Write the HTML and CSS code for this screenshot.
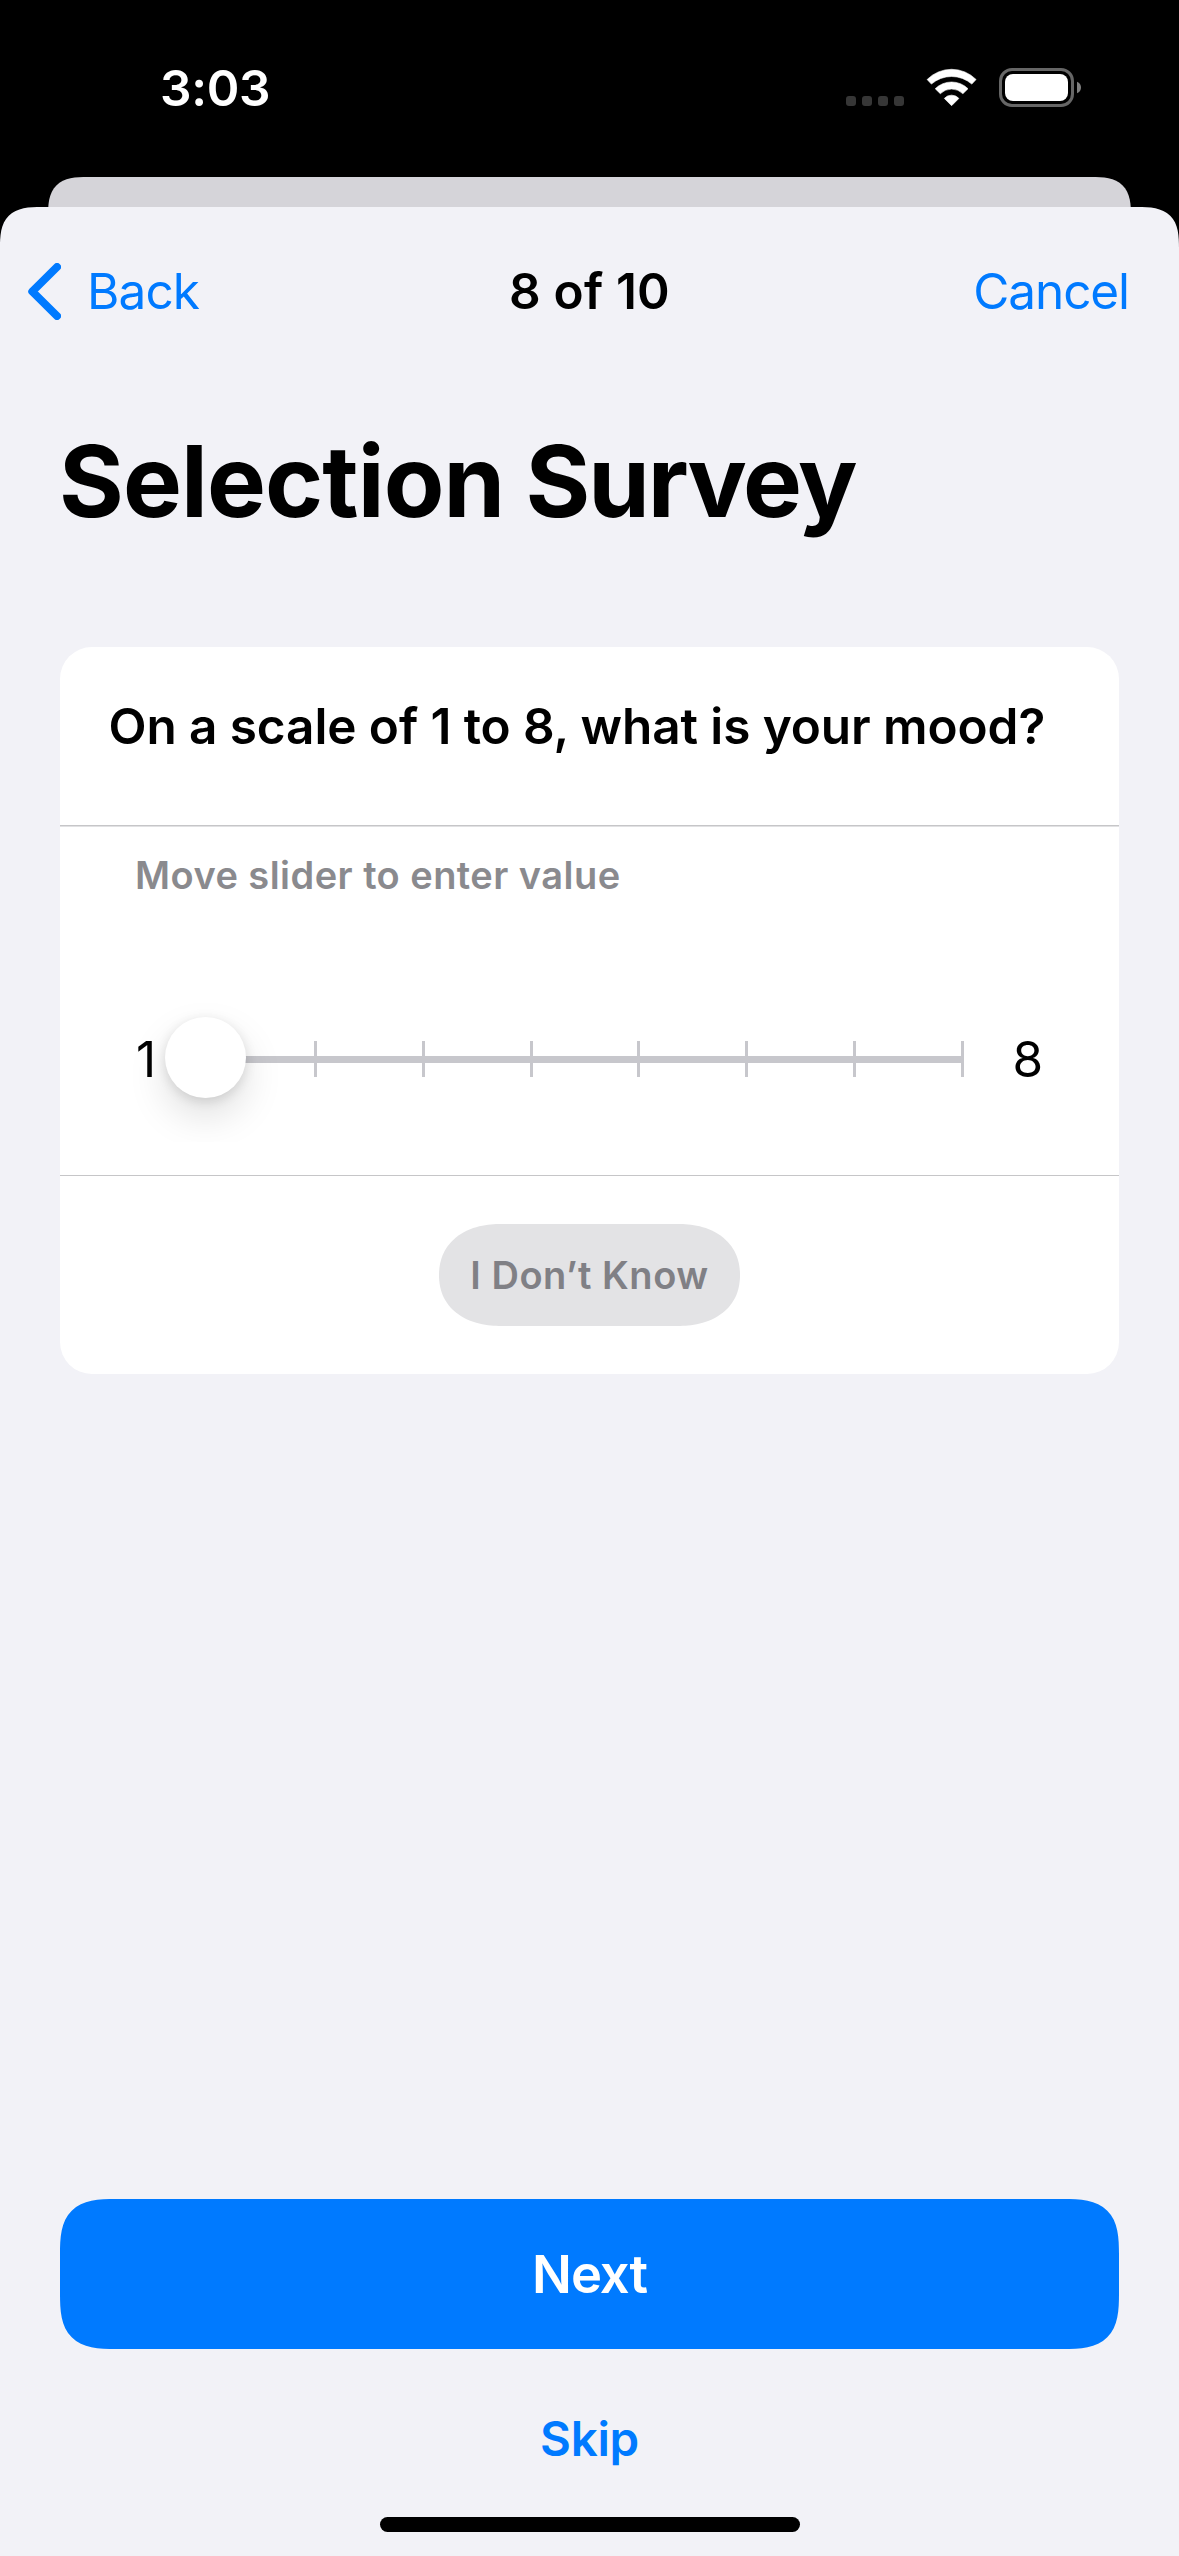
FILE: index.html
```html
<!DOCTYPE html>
<html lang="en">
<head>
<meta charset="utf-8">
<title>Selection Survey</title>
<link rel="stylesheet" href="styles.css">
</head>
<body>
<div class="screen">
  <header class="status-bar">
    <span class="clock">3:03</span>
    <div class="indicators">
      <svg width="58" height="39" viewBox="0 0 58 39" fill="#363636">
        <rect x="0" y="28" width="10" height="10" rx="3"/>
        <rect x="16" y="28" width="10" height="10" rx="3"/>
        <rect x="32" y="28" width="10" height="10" rx="3"/>
        <rect x="48" y="28" width="10" height="10" rx="3"/>
      </svg>
      <svg width="51" height="39" viewBox="0 0 51 39" fill="#fff" stroke="#fff" stroke-width=".6" stroke-linejoin="round">
        <path d="M1.1 11.5A34.5 34.5 0 0 1 50.1 11.5L45.8 16.1A30.6 30.6 0 0 0 5.4 16.1Z"/>
        <path d="M9.2 20.7A23.4 23.4 0 0 1 42 20.7L36.9 25.7A16 16 0 0 0 14.3 25.7Z"/>
        <path d="M18.3 30.4A9.8 9.8 0 0 1 32.9 30.4L25.6 37.7Z"/>
      </svg>
      <svg width="83" height="39" viewBox="0 0 83 39">
        <rect x="1.5" y="1.5" width="72" height="36" rx="11.5" fill="none" stroke="#666" stroke-width="3"/>
        <rect x="6" y="6" width="63" height="27" rx="8" fill="#fff"/>
        <path d="M78 13.7C80.7 14.8 82 17 82 19.5S80.7 24.2 78 25.3Z" fill="#808080"/>
      </svg>
    </div>
  </header>
  <div class="sheet-behind"></div>
  <main class="sheet">
    <nav class="nav">
      <a class="back">
        <svg width="33" height="57" viewBox="0 0 33 57" fill="none" stroke="#007aff" stroke-width="8" stroke-linecap="round" stroke-linejoin="round"><path d="M29 4L4.3 28.5L29 53"/></svg>
        <span class="back-label">Back</span>
      </a>
      <span class="step">8 of 10</span>
      <a class="cancel">Cancel</a>
    </nav>
    <h1 class="title"><span class="title-lead">Selection</span> Survey</h1>
    <section class="card">
      <h2 class="question">On a scale of 1 to 8, what is your mood?</h2>
      <div class="answer">
        <p class="hint">Move slider to enter value</p>
        <div class="scale">
          <span class="min">1</span>
          <div class="track">
            <i class="tick"></i><i class="tick"></i><i class="tick"></i><i class="tick"></i><i class="tick"></i><i class="tick"></i><i class="tick"></i><i class="tick"></i>
            <span class="thumb"></span>
          </div>
          <span class="max">8</span>
        </div>
      </div>
      <div class="skip-answer">
        <button class="unknown">I Don’t Know</button>
      </div>
    </section>
    <footer class="actions">
      <button class="next">Next</button>
      <a class="skip">Skip</a>
      <div class="home-indicator"></div>
    </footer>
  </main>
</div>
</body>
</html>
```

FILE: styles.css
```css
* { box-sizing: border-box; margin: 0; padding: 0; }

body {
  background: #000;
  font-family: Inter, "Liberation Sans", sans-serif;
  font-size: 49.5px;
  color: #000;
}

button { border: 0; font-family: inherit; }

.screen {
  width: 1179px;
  height: 2556px;
  display: flex;
  flex-direction: column;
  overflow: hidden;
}

/* Status bar */
.status-bar {
  height: 177px;
  flex: none;
  display: flex;
  justify-content: space-between;
  align-items: flex-start;
  padding: 58px 97px 0 160px;
  color: #fff;
}
.clock { font-weight: 600; letter-spacing: -0.3px; line-height: 60px; }
.indicators { display: flex; gap: 22px; padding-top: 10px; }
.indicators svg { display: block; }

/* Stacked sheets */
.sheet-behind {
  flex: none;
  height: 90px;
  margin: 0 48px;
  background: #d5d4d9;
  border-radius: 40px 40px 0 0;
  corner-shape: superellipse(1.56);
}
.sheet {
  position: relative;
  margin-top: -60px;
  height: 2349px;
  flex: none;
  display: flex;
  flex-direction: column;
  background: #f2f2f7;
  border-radius: 42px 42px 0 0;
  corner-shape: superellipse(1.56);
}

/* Navigation */
.nav {
  height: 168px;
  display: grid;
  grid-template-columns: 1fr auto 1fr;
  align-items: center;
  padding: 0 50px 0 28px;
  line-height: 60px;
  color: #007aff;
}
.back { display: flex; align-items: center; gap: 26px; letter-spacing: -0.9px; }
.step {
  font-weight: 600;
  letter-spacing: 0.18px;
  color: #000;
  margin-left: 22px;
}
.cancel { text-align: right; letter-spacing: -1.1px; }

.title {
  margin: 46px 59px 0;
  font-size: 99px;
  font-weight: 700;
  line-height: 120px;
  letter-spacing: -2.1px;
  white-space: nowrap;
}
.title-lead { letter-spacing: -0.9px; }

/* Question card */
.card {
  margin: 106px 60px 0;
  background: #fff;
  border-radius: 32px;
}
.question {
  padding: 49px 0 69px 48.5px;
  font-size: 49.5px;
  font-weight: 600;
  line-height: 60px;
  letter-spacing: -0.09px;
  white-space: nowrap;
  border-bottom: 1px solid #c6c6c8;
}
.answer {
  padding: 24px 75px 80px;
  border-top: 1px solid #e1e1e3;
  border-bottom: 1px solid #c6c6c8;
}
.hint {
  font-size: 38px;
  font-weight: 600;
  line-height: 48px;
  letter-spacing: 0.45px;
  color: #8a8a8e;
}
.scale {
  margin-top: 124px;
  height: 72px;
  display: flex;
  align-items: center;
  line-height: 60px;
}
.min { width: 71px; padding-left: 1px; }
.max { margin-left: 48.5px; }
.track {
  position: relative;
  width: 758px;
  height: 36px;
  display: flex;
  justify-content: space-between;
  background: linear-gradient(#c7c7cc, #c7c7cc) 0 15px / 100% 7px no-repeat;
}
.tick { width: 3px; background: #c7c7cc; }
.thumb {
  position: absolute;
  left: -41px;
  top: -24px;
  width: 81px;
  height: 81px;
  border-radius: 50%;
  background: #fff;
  box-shadow: 0 18px 39px rgba(0, 0, 0, 0.13), 0 3px 12px rgba(0, 0, 0, 0.12);
  clip-path: inset(-50px -50px -44px -33px);
}
.skip-answer { display: flex; justify-content: center; padding: 48px 0; }
.unknown {
  width: 301px;
  height: 102px;
  background: #e3e3e5;
  border-radius: 62px / 51px;
  corner-shape: superellipse(1.15);
  font-size: 38px;
  font-weight: 600;
  letter-spacing: 0.53px;
  color: #808085;
}

/* Bottom actions */
.actions {
  margin-top: auto;
  padding: 0 60px 24px;
  display: flex;
  flex-direction: column;
  align-items: center;
}
.next {
  width: 100%;
  height: 150px;
  background: #007aff;
  border-radius: 56px;
  corner-shape: superellipse(1.56);
  font-size: 52.5px;
  font-weight: 600;
  letter-spacing: -1.07px;
  color: #fff;
}
.skip {
  margin-top: 60px;
  font-size: 47.5px;
  font-weight: 600;
  line-height: 60px;
  letter-spacing: -0.3px;
  color: #007aff;
}
.home-indicator {
  margin-top: 48px;
  width: 420px;
  height: 15px;
  border-radius: 7.5px;
  background: #000;
}
```
